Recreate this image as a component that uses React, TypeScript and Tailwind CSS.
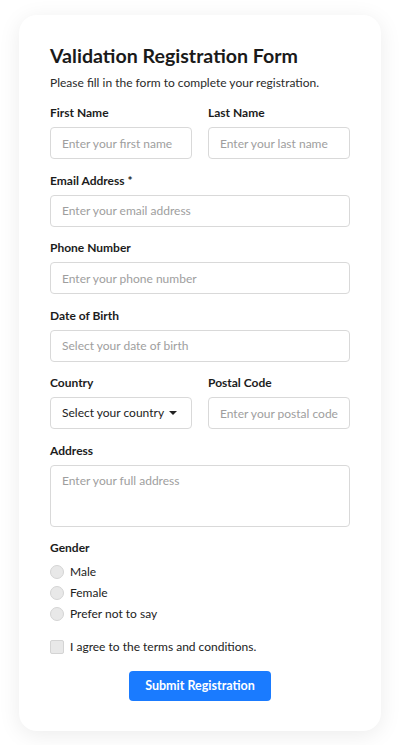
import React from "react";

const field =
  "h-[32px] w-full min-w-0 rounded-[4px] border border-[#d9d9d9] bg-white px-[11px] text-[12px] text-[#222] placeholder:text-[#9e9e9e] outline-none";
const label = "mb-[4px] block text-[12px] font-bold leading-[20px] text-[#1c1c1c]";

function Field({ name, placeholder }: { name: string; placeholder: string }) {
  return (
    <div className="mb-[11.5px] min-w-0 flex-1">
      <label className={label}>{name}</label>
      <input className={field} placeholder={placeholder} />
    </div>
  );
}

function Radio({ text }: { text: string }) {
  return (
    <label className="flex h-[21px] items-center gap-[6px] text-[12px] text-[#222]">
      <span className="h-[14px] w-[14px] rounded-full border border-[#d4d4d4] bg-[#e8e8e8]" />
      {text}
    </label>
  );
}

export default function App() {
  return (
    <div className="min-h-screen bg-white px-[19px] pt-[15px] font-['Lato',sans-serif]">
      <div className="w-[362px] rounded-[18px] bg-white px-[31px] pb-[30px] pt-[27px] shadow-[0_4px_22px_rgba(0,0,0,0.08)]">
        <h1 className="text-[19.6px] font-bold leading-[28px] text-[#1a1a1a]">
          Validation Registration Form
        </h1>
        <p className="mt-[3px] text-[12px] leading-[20px] text-[#2a2a2a]">
          Please fill in the form to complete your registration.
        </p>
        <div className="mt-[10px] flex gap-[16px]">
          <Field name="First Name" placeholder="Enter your first name" />
          <Field name="Last Name" placeholder="Enter your last name" />
        </div>
        <Field name="Email Address *" placeholder="Enter your email address" />
        <Field name="Phone Number" placeholder="Enter your phone number" />
        <Field name="Date of Birth" placeholder="Select your date of birth" />
        <div className="flex gap-[16px]">
          <div className="mb-[11.5px] min-w-0 flex-1">
            <label className={label}>Country</label>
            <div className="flex h-[32px] w-full items-center justify-between rounded-[4px] border border-[#d9d9d9] bg-white pl-[11px] pr-[14px] text-[12px] text-[#222]">
              <span className="whitespace-nowrap">Select your country</span>
              <svg width="8" height="4" viewBox="0 0 8 4" className="shrink-0">
                <path d="M0 0h8L4 4z" fill="#222" />
              </svg>
            </div>
          </div>
          <Field name="Postal Code" placeholder="Enter your postal code" />
        </div>
        <div className="mb-[11.5px]">
          <label className={label}>Address</label>
          <textarea
            className="block h-[62px] w-full resize-none rounded-[4px] border border-[#d9d9d9] px-[11px] py-[6px] text-[12px] leading-[18px] text-[#222] outline-none placeholder:text-[#9e9e9e]"
            placeholder="Enter your full address"
          />
        </div>
        <div>
          <span className="mb-[3px] block text-[12px] font-bold leading-[20px] text-[#1c1c1c]">Gender</span>
          <div className="flex flex-col">
            <Radio text="Male" />
            <Radio text="Female" />
            <Radio text="Prefer not to say" />
          </div>
        </div>
        <label className="mt-[12px] flex h-[21px] items-center gap-[6px] text-[12px] text-[#222]">
          <span className="h-[14px] w-[14px] rounded-[2px] border border-[#d4d4d4] bg-[#e8e8e8]" />
          I agree to the terms and conditions.
        </label>
        <div className="mt-[14px] flex justify-center">
          <button className="h-[30px] w-[142px] rounded-[4px] bg-[#1a7bff] text-[12.5px] font-bold text-white">
            Submit Registration
          </button>
        </div>
      </div>
    </div>
  );
}
